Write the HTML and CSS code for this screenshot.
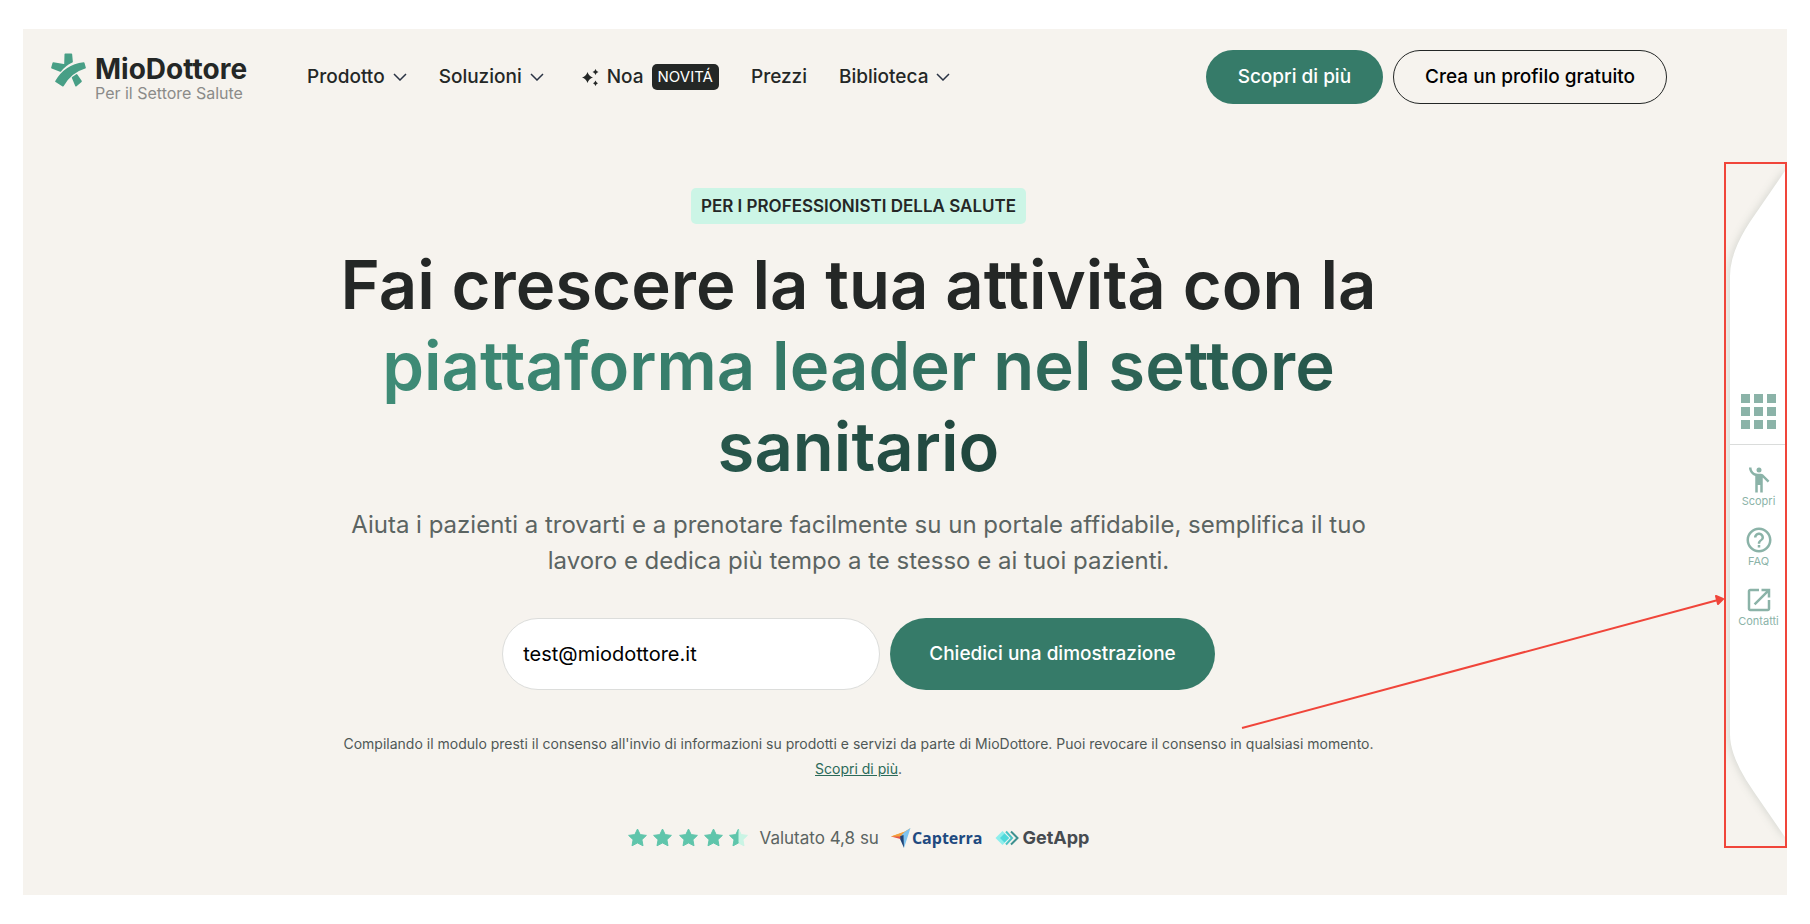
FILE: index.html
```html
<!DOCTYPE html>
<html lang="it">
<head>
<meta charset="utf-8">
<meta name="viewport" content="width=device-width, initial-scale=1">
<title>MioDottore – Per il Settore Salute</title>
<link rel="stylesheet" href="styles.css">
</head>
<body>
<div class="page">
  <header class="header">
    <a class="logo" href="#">
      <svg class="logo-mark" viewBox="7 14 105 100" aria-hidden="true">
        <g fill="#489f86" stroke="#489f86" stroke-width="5" stroke-linejoin="round">
          <path d="M50 17H68L70 39C55 46 43 56 35 67L10 57L14 43L49 49Z"/>
          <path d="M105 43L109 57C85 64 59 82 43 111L22 98C38 70 66 48 105 43Z"/>
          <path d="M72 87L84 79L97 98L82 111Z"/>
        </g>
      </svg>
      <span class="logo-text">
        <span class="logo-name">MioDottore</span>
        <span class="logo-sub">Per il Settore Salute</span>
      </span>
    </a>
    <nav class="nav" aria-label="Principale">
      <button class="nav-item" type="button">Prodotto
        <svg class="chevron" viewBox="0 0 28 16" aria-hidden="true"><path d="M2 2L14 14L26 2"/></svg>
      </button>
      <button class="nav-item" type="button">Soluzioni
        <svg class="chevron" viewBox="0 0 28 16" aria-hidden="true"><path d="M2 2L14 14L26 2"/></svg>
      </button>
      <a class="nav-item nav-noa" href="#">
        <svg class="sparkle" viewBox="0 0 17 17" aria-hidden="true">
          <path d="M5.500 3Q6.900 7.100 11 8.500Q6.900 9.900 5.500 14Q4.100 9.900 0 8.500Q4.100 7.100 5.500 3Z"/>
          <path d="M13.500 0Q14.200 2.300 16.500 3Q14.200 3.700 13.500 6Q12.800 3.700 10.500 3Q12.800 2.300 13.500 0Z"/>
          <path d="M13.500 11.500Q14.200 13.500 16 14.200Q14.200 14.900 13.500 17Q12.800 14.900 11 14.200Q12.800 13.500 13.500 11.500Z"/>
        </svg>
        Noa <span class="badge">NOVITÁ</span>
      </a>
      <a class="nav-item" href="#">Prezzi</a>
      <button class="nav-item" type="button">Biblioteca
        <svg class="chevron" viewBox="0 0 28 16" aria-hidden="true"><path d="M2 2L14 14L26 2"/></svg>
      </button>
    </nav>
    <div class="actions">
      <a class="button button-primary" href="#">Scopri di più</a>
      <a class="button button-outline" href="#">Crea un profilo gratuito</a>
    </div>
  </header>

  <main class="hero">
    <p class="eyebrow">PER I PROFESSIONISTI DELLA SALUTE</p>
    <h1 class="title">Fai crescere la tua attività con la <span class="title-accent">piattaforma leader nel settore sanitario</span></h1>
    <p class="lead">Aiuta i pazienti a trovarti e a prenotare facilmente su un portale affidabile, semplifica il tuo lavoro e dedica più tempo a te stesso e ai tuoi pazienti.</p>
    <form class="demo-form">
      <input class="email" type="email" aria-label="Email" value="test@miodottore.it">
      <button class="button button-primary submit" type="submit">Chiedici una dimostrazione</button>
    </form>
    <p class="consent">Compilando il modulo presti il consenso all'invio di informazioni su prodotti e servizi da parte di MioDottore. Puoi revocare il consenso in qualsiasi momento. <a href="#">Scopri&nbsp;di&nbsp;più</a>.</p>
    <div class="rating">
      <svg class="stars" viewBox="0 0 120 20" role="img" aria-label="4,8 su 5">
        <defs>
          <path id="star" d="M9.500 1L12.200 6.600L18.400 7.400L13.900 11.700L15 17.800L9.500 14.900L4 17.800L5.100 11.700L.6 7.400L6.800 6.600Z" stroke-width="1" stroke-linejoin="round"/>
          <clipPath id="half"><path d="M0 0H9.500V20H0Z"/></clipPath>
        </defs>
        <g fill="#5fc5ab" stroke="#5fc5ab">
          <use href="#star"/>
          <use href="#star" x="25"/>
          <use href="#star" x="51"/>
          <use href="#star" x="76"/>
        </g>
        <g transform="translate(101 0)">
          <use href="#star" fill="#c9f4e4" stroke="#c9f4e4"/>
          <use href="#star" fill="#5fc5ab" stroke="#5fc5ab" clip-path="url(#half)"/>
        </g>
      </svg>
      <span class="rating-text">Valutato 4,8 su</span>
      <a class="brand capterra" href="#">
        <svg class="capterra-mark" viewBox="0 0 20 20" aria-hidden="true">
          <path d="M0 8.500L13 4L19.500 0L10 9.500Z" fill="#f3a13c"/>
          <path d="M19.500 0L13 20L12 8L9 7Z" fill="#7fc4f0"/>
          <path d="M8 8.500L12.500 7L13 20Z" fill="#1d4377"/>
          <path d="M0 8.500L9 7.500L9.500 11Z" fill="#e5544b"/>
          <path d="M0 8.500L14 3.500L9 8.500Z" fill="#f3a13c"/>
        </svg>
        Capterra
      </a>
      <a class="brand getapp" href="#">
        <svg class="getapp-mark" viewBox="0 0 24 16" aria-hidden="true">
          <path d="M7.500 1L14.500 8L7.500 15L.5 8Z" fill="#8eeeec"/>
          <path d="M9.500 3.500L14 8L9.500 12.500L5 8Z" fill="#4fd8da"/>
          <path d="M11 1.500L17 8L11 14.500" fill="none" stroke="#4cc3c5" stroke-width="2"/>
          <path d="M16 1.500L22.500 8L16 14.500" fill="none" stroke="#3d908f" stroke-width="2"/>
        </svg>
        GetApp
      </a>
    </div>
  </main>

  <svg class="arrow" viewBox="0 0 486 136" aria-hidden="true">
    <path d="M3 133L479 5" fill="none" stroke="#f0453a" stroke-width="2"/>
    <path d="M477 1L484 4L479 9Z" fill="#f0453a" stroke="#f0453a" stroke-width="2" stroke-linejoin="round"/>
  </svg>

  <aside class="side" aria-label="Strumenti">
    <svg class="side-shape" viewBox="0 0 63 686" preserveAspectRatio="none" aria-hidden="true">
      <path d="M63 6L30 54Q6 88 6 114V572Q6 596 30 630L63 678Z"/>
    </svg>
    <div class="side-content">
      <button class="side-grid" type="button" aria-label="Menu">
        <svg viewBox="0 0 35 35" aria-hidden="true">
          <path d="M0 0h9v9H0zM13 0h9v9h-9zM26 0h9v9h-9zM0 13h9v9H0zM13 13h9v9h-9zM26 13h9v9h-9zM0 26h9v9H0zM13 26h9v9h-9zM26 26h9v9h-9z"/>
        </svg>
      </button>
      <div class="side-list">
        <a class="side-item" href="#">
          <svg viewBox="0 0 24 24" aria-hidden="true"><circle cx="12" cy="4" r="2"/><path d="M15.890 8.110C15.500 7.720 14.830 7 13.530 7h-2.540C8.240 6.990 6 4.750 6 2H4c0 3.160 2.110 5.840 5 6.710V22h2v-6h2v6h2V10.050L18.950 14l1.410-1.410-4.470-4.480z"/></svg>
          Scopri
        </a>
        <a class="side-item" href="#">
          <svg viewBox="0 0 24 24" aria-hidden="true"><path d="M11 18h2v-2h-2v2zm1-16C6.480 2 2 6.480 2 12s4.480 10 10 10 10-4.480 10-10S17.520 2 12 2zm0 18c-4.410 0-8-3.590-8-8s3.590-8 8-8 8 3.590 8 8-3.590 8-8 8zm0-14c-2.210 0-4 1.790-4 4h2c0-1.100.9-2 2-2s2 .9 2 2c0 2-3 1.750-3 5h2c0-2.250 3-2.500 3-5 0-2.210-1.790-4-4-4z"/></svg>
          FAQ
        </a>
        <a class="side-item" href="#">
          <svg viewBox="0 0 24 24" aria-hidden="true"><path d="M19 19H5V5h7V3H5c-1.110 0-2 .9-2 2v14c0 1.100.89 2 2 2h14c1.100 0 2-.9 2-2v-7h-2v7zM14 3v2h3.590l-9.830 9.830 1.410 1.410L19 6.410V10h2V3h-7z"/></svg>
          Contatti
        </a>
      </div>
    </div>
  </aside>
</div>
</body>
</html>
```
FILE: styles.css
```css
* {
  box-sizing: border-box;
}

body {
  margin: 0;
  padding: 29px 23px;
  background: #fff;
  color: #242726;
  font-family: Inter, "Liberation Sans", sans-serif;
}

h1,
p {
  margin: 0;
}

a {
  color: inherit;
  text-decoration: none;
}

button,
input {
  font-family: inherit;
}

.page {
  position: relative;
  min-height: calc(100vh - 58px);
  background: #f6f3ee;
}

/* Header */

.header {
  display: flex;
  align-items: center;
  padding: 21px 120px 0 28px;
}

.logo {
  display: flex;
  gap: 9px;
  margin-right: 60px;
}

.logo-mark {
  width: 35px;
  height: 34px;
}

.logo-text {
  display: flex;
  flex-direction: column;
}

.logo-name {
  font-size: 28px;
  font-weight: 700;
  line-height: 32px;
}

.logo-sub {
  color: #8b8b89;
  font-size: 16px;
  line-height: 16px;
}

.nav {
  display: flex;
  align-items: center;
  gap: 32px;
}

.nav-item {
  display: flex;
  align-items: center;
  gap: 8px;
  padding: 0;
  border: 0;
  background: none;
  color: #242726;
  font-size: 19px;
  font-weight: 500;
  line-height: 26px;
}

.nav-noa {
  padding-left: 6px;
}

.chevron {
  width: 14px;
  height: 8px;
  fill: none;
  stroke: #2a3344;
  stroke-width: 3;
}

.sparkle {
  width: 17px;
  height: 17px;
  fill: #242726;
}

.badge {
  padding: 0 6px;
  border-radius: 5px;
  background: #242726;
  color: #fff;
  font-size: 15px;
  font-weight: 400;
}

.actions {
  display: flex;
  gap: 10px;
  margin-left: auto;
}

.button {
  padding: 13px 31px;
  border: 1px solid transparent;
  border-radius: 40px;
  font-size: 19px;
  font-weight: 500;
  line-height: 26px;
  white-space: nowrap;
}

.button-primary {
  background: #367b69;
  color: #fff;
}

.button-outline {
  border-color: #242726;
  color: #000;
}

/* Hero */

.hero {
  display: flex;
  flex-direction: column;
  align-items: center;
  padding: 84px 93px 40px 0;
  text-align: center;
}

.eyebrow {
  padding: 5px 10px;
  border-radius: 5px;
  background: #ccf5e6;
  font-size: 17px;
  font-weight: 600;
  line-height: 26px;
}

.title {
  max-width: 1080px;
  margin-top: 20px;
  font-size: 67px;
  font-weight: 600;
  line-height: 81px;
}

.title-accent {
  background: linear-gradient(100deg, #3f8c77 0%, #367b69 30%, #20453d 100%);
  background-clip: text;
  -webkit-background-clip: text;
  color: transparent;
}

.lead {
  max-width: 1060px;
  margin-top: 20px;
  color: #5b6462;
  font-size: 24px;
  line-height: 36px;
}

.demo-form {
  display: flex;
  gap: 10px;
  margin-top: 39px;
}

.email {
  width: 378px;
  padding: 0 20px;
  border: 1px solid #dcdddb;
  border-radius: 40px;
  background: #fff;
  color: #000;
  font-size: 20px;
}

.submit {
  padding: 22px 38px;
}

.consent {
  max-width: 1080px;
  margin-top: 41px;
  color: #4f5856;
  font-size: 14px;
  line-height: 25px;
}

.consent a {
  color: #2b6a59;
  text-decoration: underline;
}

.rating {
  display: flex;
  align-items: center;
  gap: 12px;
  margin-top: 44px;
}

.stars {
  width: 120px;
  height: 20px;
}

.rating-text {
  color: #5b6462;
  font-size: 17px;
  line-height: 26px;
}

.brand {
  display: flex;
  align-items: center;
  line-height: 26px;
}

.capterra {
  gap: 1px;
  color: #20497f;
  font-family: "Open Sans", sans-serif;
  font-size: 16px;
  font-weight: 700;
}

.capterra-mark {
  width: 20px;
  height: 20px;
}

.getapp {
  gap: 4px;
  color: #464b50;
  font-size: 18px;
  font-weight: 700;
}

.getapp-mark {
  width: 24px;
  height: 16px;
}

/* Side tab, framed by the highlight box */

.side {
  position: absolute;
  top: 133px;
  right: 0;
  width: 63px;
  height: 686px;
  overflow: hidden;
  border: 2px solid #f0453a;
}

.side-shape {
  position: absolute;
  top: -2px;
  left: -2px;
  width: 63px;
  height: 686px;
  fill: #fff;
  filter: drop-shadow(-1px 0 4px rgba(40, 60, 50, 0.16));
}

.side-content {
  position: relative;
  margin-right: -2px;
  padding: 230px 0 0 4px;
}

.side-grid {
  display: flex;
  justify-content: center;
  width: 100%;
  padding: 0 0 15px;
  border: 0;
  border-bottom: 1px solid #dadcdb;
  background: none;
}

.side-grid svg {
  width: 35px;
  height: 35px;
  fill: #8bb3a8;
}

.side-list {
  display: flex;
  flex-direction: column;
  gap: 18px;
  padding-top: 20px;
}

.side-item {
  display: flex;
  flex-direction: column;
  align-items: center;
  color: #8bb3a8;
  font-size: 11px;
  line-height: 12px;
}

.side-item svg {
  width: 30px;
  height: 30px;
  fill: currentColor;
}

.arrow {
  position: absolute;
  top: 566px;
  right: 62px;
  width: 486px;
  height: 136px;
}
```
